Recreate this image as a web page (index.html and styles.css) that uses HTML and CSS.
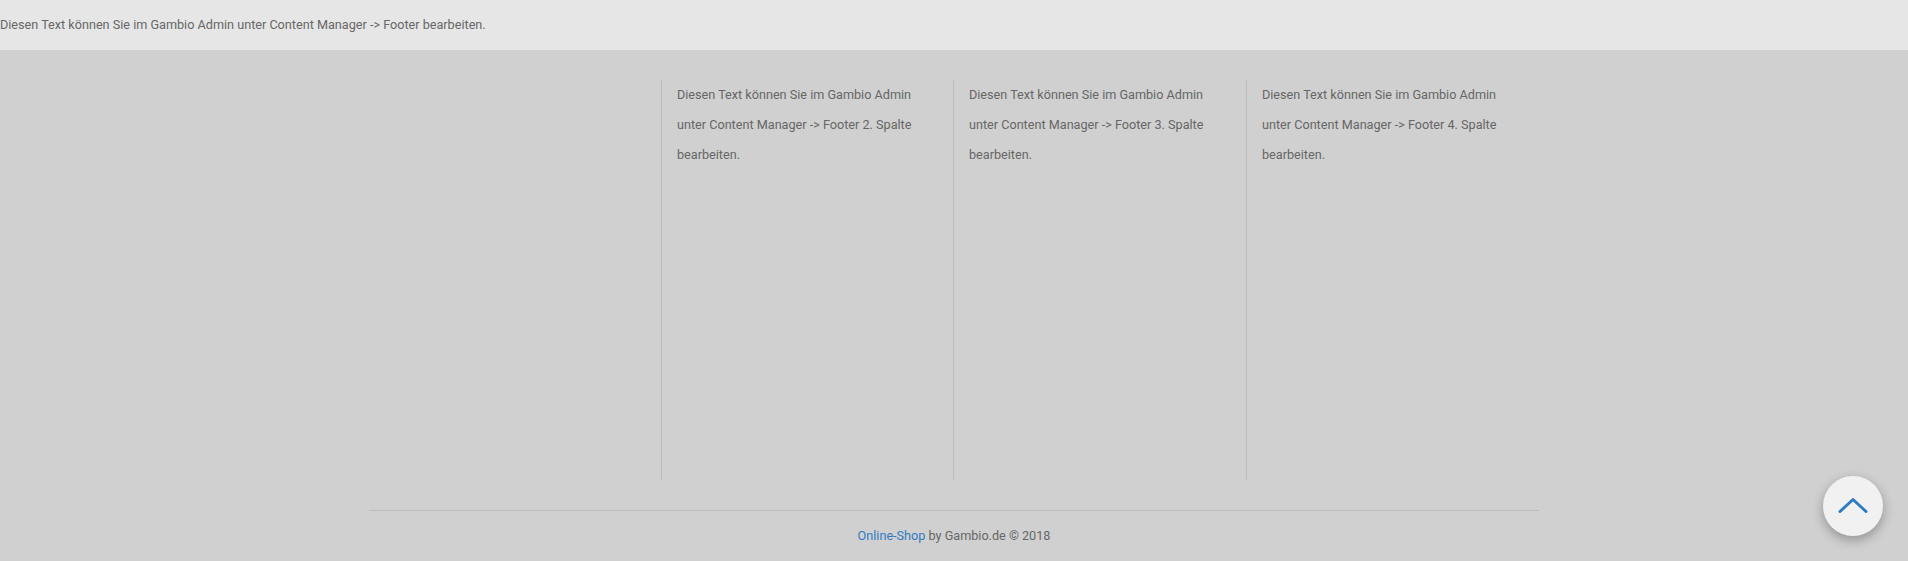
FILE: index.html
```html
<!DOCTYPE html>
<html lang="de">
<head>
    <meta charset="UTF-8">
    <meta name="viewport" content="width=device-width, initial-scale=1.0">
    <title>Footer</title>
    <link rel="stylesheet" href="styles.css">
</head>
<body>
    <div class="top-bar">Diesen Text können Sie im Gambio Admin unter Content Manager -&gt; Footer bearbeiten.</div>

    <footer class="footer">
        <div class="container">
            <div class="row">
                <div class="col"></div>
                <div class="col col-bordered">Diesen Text können Sie im Gambio Admin unter Content Manager -&gt; Footer 2. Spalte bearbeiten.</div>
                <div class="col col-bordered">Diesen Text können Sie im Gambio Admin unter Content Manager -&gt; Footer 3. Spalte bearbeiten.</div>
                <div class="col col-bordered">Diesen Text können Sie im Gambio Admin unter Content Manager -&gt; Footer 4. Spalte bearbeiten.</div>
            </div>
            <div class="copyright">
                <a href="#">Online-Shop</a> by Gambio.de © 2018
            </div>
        </div>
    </footer>

    <a href="#" class="scroll-top" aria-label="Nach oben">
        <svg width="30" height="16" viewBox="0 0 30 16">
            <polyline points="2,14.5 15,2.5 28,14.5" fill="none" stroke="#2d7bc2" stroke-width="3" stroke-linecap="round" stroke-linejoin="round"/>
        </svg>
    </a>
</body>
</html>
```

FILE: styles.css
```css
body {
    margin: 0;
    font-family: Roboto, "Liberation Sans", Arial, sans-serif;
    font-size: 12.65px;
    color: #666;
    background-color: #d0d0d0;
}
.top-bar {
    height: 50px;
    line-height: 49px;
    background-color: #e6e6e6;
}
.footer {
    padding-top: 30px;
    background-color: #d0d0d0;
}
.container {
    width: 1170px;
    margin: 0 auto;
}
.row {
    display: grid;
    grid-template-columns: 292px 292px 293px 293px;
    padding-bottom: 30px;
    border-bottom: 1px solid #bdbdbd;
}
.col {
    min-height: 400px;
    padding: 0 15px;
    line-height: 30px;
}
.col-bordered {
    border-left: 1px solid #bdbdbd;
}
.copyright {
    text-align: center;
    padding: 13px 0 12px;
    line-height: 24px;
}
.copyright a {
    color: #2f7bbf;
    text-decoration: none;
}
.scroll-top {
    position: fixed;
    right: 25px;
    bottom: 25px;
    width: 60px;
    height: 60px;
    border-radius: 50%;
    background-color: #f1f1f1;
    box-shadow: 0 4px 12px rgba(0, 0, 0, 0.3);
    display: flex;
    align-items: center;
    justify-content: center;
}
.scroll-top svg {
    margin-top: -3px;
}
```
